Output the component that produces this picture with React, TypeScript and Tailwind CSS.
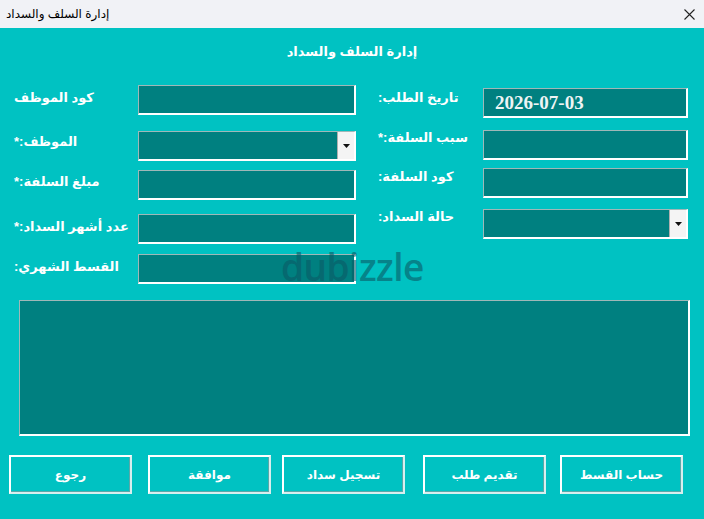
import React from 'react';

const ar = { fontFamily: '"Liberation Sans", "DejaVu Sans", sans-serif' };

function Field({ dropdown, value }: { dropdown?: boolean; value?: string }) {
  return (
    <div className="relative flex h-[30px] w-full items-center border-t border-l border-t-[#9fb8b8] border-l-[#9fb8b8] border-b-2 border-r-2 border-b-white border-r-white bg-[#008080]">
      {value && (
        <span
          className="pl-[11px] pt-[1px] text-[19px] font-bold text-[#eef4f4]"
          style={{ fontFamily: '"Liberation Serif", serif' }}
        >
          {value}
        </span>
      )}
      {dropdown && (
        <div className="absolute right-0 top-0 flex h-full w-[17px] items-center justify-center border-l border-[#b0b0b0] bg-[#f4f4f4]">
          <svg width="7" height="4" viewBox="0 0 7 4">
            <path d="M0 0h7L3.5 4z" fill="#111" />
          </svg>
        </div>
      )}
    </div>
  );
}

function Row({ label, mt, dropdown, value, labelW, inputW, labelPt }: {
  label: string; mt: string; dropdown?: boolean; value?: string; labelW: string; inputW: string; labelPt: string;
}) {
  return (
    <div className={`flex ${mt}`}>
      <div className={`${labelW} ${labelPt} shrink-0`}>
        <div dir="rtl" className="text-left text-[13px] font-bold leading-[16px] text-white" style={ar}>
          {label}
        </div>
      </div>
      <div className={inputW}>
        <Field dropdown={dropdown} value={value} />
      </div>
    </div>
  );
}

function Btn({ label }: { label: string }) {
  return (
    <div className="flex h-[39px] w-[123px] items-center justify-center border-2 border-t-white border-l-white border-b-[#d8eeee] border-r-[#d8eeee] bg-[#00c2c2] shadow-[inset_-1px_-1px_0_#5aa8a8]">
      <span dir="rtl" className="text-[12px] font-bold text-white" style={ar}>
        {label}
      </span>
    </div>
  );
}

export default function App() {
  return (
    <div className="relative h-[519px] w-[704px] overflow-hidden bg-[#00c2c2]">
      {/* title bar */}
      <div className="flex h-[28px] items-center justify-between bg-[#f1f2f6] pl-[6px] pr-[9px]">
        <span dir="rtl" className="text-[12px] text-black" style={ar}>
          إدارة السلف والسداد
        </span>
        <svg width="11" height="11" viewBox="0 0 11 11">
          <path d="M0.5 0.5l10 10M10.5 0.5l-10 10" stroke="#222" strokeWidth="1.1" />
        </svg>
      </div>

      <div className="pt-[10px] text-center">
        <span dir="rtl" className="text-[13px] font-bold text-white" style={ar}>
          إدارة السلف والسداد
        </span>
      </div>

      <div className="flex pl-[14px] pt-[22px]">
        {/* left column */}
        <div className="flex w-[342px] flex-col">
          <Row label="كود الموظف" mt="mt-[1px]" labelW="w-[124px]" inputW="w-[218px]" labelPt="pt-[5px]" />
          <Row label="الموظف:*" mt="mt-[16px]" dropdown labelW="w-[124px]" inputW="w-[218px]" labelPt="pt-[3px]" />
          <Row label="مبلغ السلفة:*" mt="mt-[9px]" labelW="w-[124px]" inputW="w-[218px]" labelPt="pt-[4px]" />
          <Row label="عدد أشهر السداد:*" mt="mt-[14px]" labelW="w-[124px]" inputW="w-[218px]" labelPt="pt-[5px]" />
          <Row label="القسط الشهري:" mt="mt-[10px]" labelW="w-[124px]" inputW="w-[218px]" labelPt="pt-[5px]" />
        </div>
        {/* right column */}
        <div className="ml-[22px] flex w-[310px] flex-col">
          <Row label="تاريخ الطلب:" mt="mt-[4px]" value="2026-07-03" labelW="w-[105px]" inputW="w-[205px]" labelPt="pt-[2px]" />
          <Row label="سبب السلفة:*" mt="mt-[12px]" labelW="w-[105px]" inputW="w-[205px]" labelPt="pt-[0px]" />
          <Row label="كود السلفة:" mt="mt-[8px]" labelW="w-[105px]" inputW="w-[205px]" labelPt="pt-[1px]" />
          <Row label="حالة السداد:" mt="mt-[11px]" dropdown labelW="w-[105px]" inputW="w-[205px]" labelPt="pt-[0px]" />
        </div>
      </div>

      {/* big box */}
      <div className="ml-[19px] mt-[16px] h-[136px] w-[671px] border-t border-l border-t-[#9fb8b8] border-l-[#9fb8b8] border-b-2 border-r-2 border-b-white border-r-white bg-[#008080]" />

      {/* buttons */}
      <div className="mt-[19px] flex pl-[9px]">
        <Btn label="رجوع" />
        <div className="ml-[16px]"><Btn label="موافقة" /></div>
        <div className="ml-[11px]"><Btn label="تسجيل سداد" /></div>
        <div className="ml-[18px]"><Btn label="تقديم طلب" /></div>
        <div className="ml-[14px]"><Btn label="حساب القسط" /></div>
      </div>

      {/* watermark */}
      <div
        className="pointer-events-none absolute left-[281px] top-[239px] text-[37px] font-semibold tracking-[-0.5px] text-[#0a5a66] opacity-60"
        style={{ fontFamily: '"Open Sans", sans-serif' }}
      >
        dubizzle
      </div>
    </div>
  );
}
